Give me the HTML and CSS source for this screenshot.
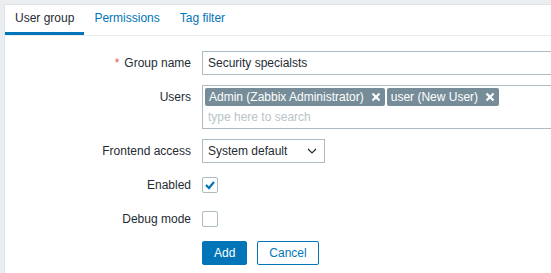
FILE: index.html
```html
<!DOCTYPE html>
<html lang="en">
<head>
    <meta charset="UTF-8">
    <meta name="viewport" content="width=device-width, initial-scale=1.0">
    <title>User group</title>
    <link rel="stylesheet" href="styles.css">
</head>
<body>
    <div class="panel">
        <ul class="tabs">
            <li><a class="tab active">User group</a></li>
            <li><a class="tab">Permissions</a></li>
            <li><a class="tab">Tag filter</a></li>
        </ul>

        <form class="form-grid">
            <label class="form-label required">Group name</label>
            <div class="form-field">
                <input type="text" class="text-input" value="Security specialsts">
            </div>

            <label class="form-label">Users</label>
            <div class="form-field">
                <div class="multiselect">
                    <div class="ms-tags">
                        <span class="ms-tag">Admin (Zabbix Administrator)
                            <svg class="ms-remove" width="10" height="10" viewBox="0 0 10 10"><path d="M1.5 1.5L8.5 8.5M8.5 1.5L1.5 8.5" stroke="#fff" stroke-width="2.2"/></svg>
                        </span>
                        <span class="ms-tag">user (New User)
                            <svg class="ms-remove" width="10" height="10" viewBox="0 0 10 10"><path d="M1.5 1.5L8.5 8.5M8.5 1.5L1.5 8.5" stroke="#fff" stroke-width="2.2"/></svg>
                        </span>
                    </div>
                    <input type="text" class="ms-input" placeholder="type here to search">
                </div>
            </div>

            <label class="form-label">Frontend access</label>
            <div class="form-field">
                <div class="select">
                    <span>System default</span>
                    <svg width="10" height="6" viewBox="0 0 10 6"><path d="M1 1L5 5L9 1" fill="none" stroke="#1f2c33" stroke-width="1.2"/></svg>
                </div>
            </div>

            <label class="form-label">Enabled</label>
            <div class="form-field">
                <span class="checkbox">
                    <svg width="14" height="14" viewBox="0 0 14 14"><path d="M3 7L6 10L11 4" fill="none" stroke="#0275b8" stroke-width="2.2"/></svg>
                </span>
            </div>

            <label class="form-label">Debug mode</label>
            <div class="form-field">
                <span class="checkbox"></span>
            </div>

            <div></div>
            <div class="form-actions">
                <button type="button" class="btn btn-primary">Add</button>
                <button type="button" class="btn btn-alt">Cancel</button>
            </div>
        </form>
    </div>
</body>
</html>
```

FILE: styles.css
```css
html, body {
    height: 100%;
}
body {
    margin: 0;
    padding: 4px 0 0 4px;
    box-sizing: border-box;
    overflow: hidden;
    background-color: #ebeef0;
    font-family: "Liberation Sans", Arial, sans-serif;
    font-size: 12px;
    color: #1f2c33;
}
.panel {
    background-color: #fff;
    border-top: 1px solid #dfe4e7;
    border-left: 1px solid #dfe4e7;
    height: 100%;
    overflow: hidden;
}
.tabs {
    display: flex;
    margin: 0;
    padding: 0;
    list-style: none;
    border-bottom: 1px solid #ebeef0;
}
.tab {
    display: block;
    padding: 0 10px;
    line-height: 27px;
    border-bottom: 3px solid transparent;
    color: #0275b8;
    cursor: pointer;
}
.tab.active {
    color: #1f2c33;
    border-bottom-color: #0275b8;
}
.form-grid {
    display: grid;
    grid-template-columns: 186px 1fr;
    column-gap: 11px;
    row-gap: 10px;
    padding-top: 15px;
}
.form-label {
    text-align: right;
    line-height: 24px;
}
.form-label.required::before {
    content: "*";
    color: #e45959;
    margin-right: 5px;
}
.form-field {
    display: flex;
    align-items: center;
    min-height: 24px;
    min-width: 0;
}
.text-input {
    box-sizing: border-box;
    flex: none;
    width: 453px;
    height: 24px;
    margin: 0;
    padding: 0 5px;
    border: 1px solid #acbbc2;
    font: inherit;
    color: #1f2c33;
}
.multiselect {
    box-sizing: border-box;
    flex: none;
    width: 453px;
    height: 44px;
    border: 1px solid #acbbc2;
}
.ms-tags {
    display: flex;
    gap: 2px;
    padding: 2px 2px 0;
}
.ms-tag {
    display: inline-flex;
    align-items: center;
    gap: 7px;
    height: 18px;
    padding: 0 4px;
    background-color: #768d99;
    color: #fff;
    border-radius: 2px;
}
.ms-input {
    display: block;
    box-sizing: border-box;
    width: 100%;
    height: 21px;
    margin: 0;
    padding: 0 5px;
    border: none;
    outline: none;
    font: inherit;
}
.ms-input::placeholder {
    color: #b8c4ca;
}
.select {
    box-sizing: border-box;
    display: flex;
    align-items: center;
    justify-content: space-between;
    width: 123px;
    height: 24px;
    padding: 0 7px 0 5px;
    border: 1px solid #acbbc2;
}
.checkbox {
    box-sizing: border-box;
    display: flex;
    align-items: center;
    justify-content: center;
    width: 16px;
    height: 16px;
    border: 1px solid #acbbc2;
    border-radius: 2px;
}
.form-actions {
    display: flex;
    gap: 10px;
}
.btn {
    height: 24px;
    padding: 0 11px;
    border: 1px solid #0275b8;
    border-radius: 2px;
    font: inherit;
    cursor: pointer;
}
.btn-primary {
    background-color: #0275b8;
    color: #fff;
}
.btn-alt {
    background-color: #fff;
    color: #0275b8;
}
```
